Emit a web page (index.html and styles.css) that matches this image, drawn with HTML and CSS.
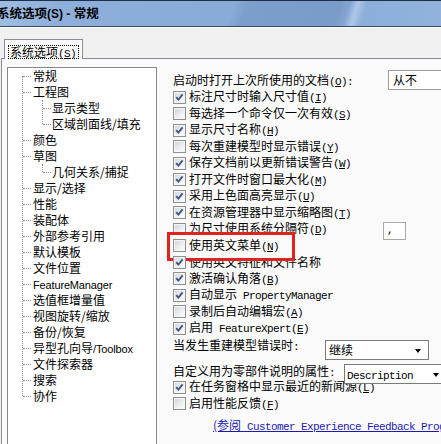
FILE: index.html
```html
<!DOCTYPE html>
<html lang="zh-CN">
<head>
<meta charset="utf-8">
<title>系统选项(S) - 常规</title>
<link rel="stylesheet" href="styles.css">
</head>
<body>
<div class="dialog">
  <div class="titlebar"><span class="title">系统选项<span class="tl">(S) - </span>常规</span></div>
  <div class="tabstrip">
    <div class="tab"><span class="tab-label">系统选项<span class="tm">(<u>S</u>)</span></span></div>
  </div>
  <div class="panel">
    <div class="tree">
      <ul class="tree-root">
        <li><div class="node">常规</div></li>
        <li><div class="node">工程图</div>
          <ul class="tree-sub">
            <li><div class="node">显示类型</div></li>
            <li><div class="node">区域剖面线/填充</div></li>
          </ul>
        </li>
        <li><div class="node">颜色</div></li>
        <li><div class="node">草图</div>
          <ul class="tree-sub">
            <li><div class="node">几何关系/捕捉</div></li>
          </ul>
        </li>
        <li><div class="node">显示/选择</div></li>
        <li><div class="node">性能</div></li>
        <li><div class="node">装配体</div></li>
        <li><div class="node">外部参考引用</div></li>
        <li><div class="node">默认模板</div></li>
        <li><div class="node">文件位置</div></li>
        <li><div class="node"><span class="lat">FeatureManager</span></div></li>
        <li><div class="node">选值框增量值</div></li>
        <li><div class="node">视图旋转/缩放</div></li>
        <li><div class="node">备份/恢复</div></li>
        <li><div class="node">异型孔向导<span class="lat">/Toolbox</span></div></li>
        <li><div class="node">文件探索器</div></li>
        <li><div class="node">搜索</div></li>
        <li><div class="node">协作</div></li>
      </ul>
    </div>

    <div class="opts">
      <div class="row row-first">
        <span class="lbl">启动时打开上次所使用的文档<span class="m">(<u>O</u>):</span></span>
        <div class="combo combo-never"><span class="combo-text">从不</span></div>
      </div>

      <div class="row"><span class="cb"><svg class="chk" viewBox="0 0 13 13"><path d="M3.2 6.2 L5.4 8.6 L9.6 3.4"/></svg></span><span class="lbl">标注尺寸时输入尺寸值<span class="m">(<u>I</u>)</span></span></div>
      <div class="row"><span class="cb"></span><span class="lbl">每选择一个命令仅一次有效<span class="m">(<u>S</u>)</span></span></div>
      <div class="row"><span class="cb"><svg class="chk" viewBox="0 0 13 13"><path d="M3.2 6.2 L5.4 8.6 L9.6 3.4"/></svg></span><span class="lbl">显示尺寸名称<span class="m">(<u>H</u>)</span></span></div>
      <div class="row"><span class="cb"></span><span class="lbl">每次重建模型时显示错误<span class="m">(<u>Y</u>)</span></span></div>
      <div class="row"><span class="cb"><svg class="chk" viewBox="0 0 13 13"><path d="M3.2 6.2 L5.4 8.6 L9.6 3.4"/></svg></span><span class="lbl">保存文档前以更新错误警告<span class="m">(<u>W</u>)</span></span></div>
      <div class="row"><span class="cb"><svg class="chk" viewBox="0 0 13 13"><path d="M3.2 6.2 L5.4 8.6 L9.6 3.4"/></svg></span><span class="lbl">打开文件时窗口最大化<span class="m">(<u>M</u>)</span></span></div>
      <div class="row"><span class="cb"><svg class="chk" viewBox="0 0 13 13"><path d="M3.2 6.2 L5.4 8.6 L9.6 3.4"/></svg></span><span class="lbl">采用上色面高亮显示<span class="m">(<u>U</u>)</span></span></div>
      <div class="row"><span class="cb"><svg class="chk" viewBox="0 0 13 13"><path d="M3.2 6.2 L5.4 8.6 L9.6 3.4"/></svg></span><span class="lbl">在资源管理器中显示缩略图<span class="m">(<u>T</u>)</span></span></div>
      <div class="row row-sep"><span class="cb"></span><span class="lbl">为尺寸使用系统分隔符<span class="m">(<u>D</u>)</span></span><span class="sep-input">,</span></div>
      <div class="row row-hl"><span class="cb"></span><span class="lbl">使用英文菜单<span class="m">(<u>N</u>)</span></span></div>
      <div class="row"><span class="cb"><svg class="chk" viewBox="0 0 13 13"><path d="M3.2 6.2 L5.4 8.6 L9.6 3.4"/></svg></span><span class="lbl">使用英文特征和文件名称</span></div>
      <div class="row"><span class="cb"><svg class="chk" viewBox="0 0 13 13"><path d="M3.2 6.2 L5.4 8.6 L9.6 3.4"/></svg></span><span class="lbl">激活确认角落<span class="m">(<u>B</u>)</span></span></div>
      <div class="row"><span class="cb"><svg class="chk" viewBox="0 0 13 13"><path d="M3.2 6.2 L5.4 8.6 L9.6 3.4"/></svg></span><span class="lbl">自动显示<span class="m"> PropertyManager</span></span></div>
      <div class="row"><span class="cb"></span><span class="lbl">录制后自动编辑宏<span class="m">(<u>A</u>)</span></span></div>
      <div class="row"><span class="cb"><svg class="chk" viewBox="0 0 13 13"><path d="M3.2 6.2 L5.4 8.6 L9.6 3.4"/></svg></span><span class="lbl">启用<span class="m"> FeatureXpert(<u>E</u>)</span></span></div>

      <div class="row row-combo1">
        <span class="lbl">当发生重建模型错误时<span class="m">:</span></span>
        <div class="combo combo-cont"><span class="combo-text">继续</span><span class="arrow"></span></div>
      </div>
      <div class="row row-combo2">
        <span class="lbl">自定义用为零部件说明的属性<span class="m">:</span></span>
        <div class="combo combo-desc"><span class="combo-text m">Description</span><span class="arrow"></span></div>
      </div>

      <div class="row"><span class="cb"><svg class="chk" viewBox="0 0 13 13"><path d="M3.2 6.2 L5.4 8.6 L9.6 3.4"/></svg></span><span class="lbl">在任务窗格中显示最近的新闻源<span class="m">(<u>L</u>)</span></span></div>
      <div class="row"><span class="cb"></span><span class="lbl">启用性能反馈<span class="m">(<u>F</u>)</span></span></div>
      <div class="row row-link"><a class="link" href="#">(参阅<span class="m"> Customer Experience Feedback Program)</span></a></div>
    </div>
  </div>
</div>
</body>
</html>
```

FILE: styles.css
```css
* {
  box-sizing: border-box;
  margin: 0;
  padding: 0;
}

html, body {
  width: 441px;
  height: 444px;
  overflow: hidden;
}

body {
  background: #f0f0f0;
  font-family: "Noto Sans CJK SC", "Liberation Sans", sans-serif;
  font-size: 12px;
  color: #000;
}

.dialog {
  width: 480px;
  height: 444px;
  display: flex;
  flex-direction: column;
}

/* ---------- title bar ---------- */
.titlebar {
  flex: none;
  height: 27px;
  border-top: 1px solid #1f2f4a;
  border-bottom: 1px solid #344d70;
  box-shadow: 0 1px 0 #ffffff;
  background:
    linear-gradient(108deg, transparent 0 72%, rgba(200, 220, 245, 0.55) 73.5%, transparent 75.5%),
    linear-gradient(112deg, transparent 0 48%, rgba(60, 90, 140, 0.16) 51%, rgba(60, 90, 140, 0.2) 70%, transparent 73%),
    linear-gradient(90deg, #9fbde2 0%, #8eafd9 12%, #89abd6 45%, #8aacd7 70%, #95b5dd 100%);
  display: flex;
  align-items: center;
}

.title {
  margin-left: -3px;
  font-weight: bold;
  font-size: 12.5px;
  line-height: 16px;
  white-space: nowrap;
}

.tl {
  font-family: "Liberation Sans", sans-serif;
  font-size: 12px;
}

/* ---------- tab strip ---------- */
.tabstrip {
  flex: none;
  padding: 12px 0 0 4px;
  display: flex;
}

.tab {
  position: relative;
  z-index: 1;
  width: 79px;
  height: 20px;
  margin-bottom: -1px;
  background: #fafafa;
  border: 1px solid #898c95;
  border-bottom: none;
  padding: 3px 0 0 3px;
}

.tab-label {
  display: inline-block;
  height: 14px;
  line-height: 12px;
  padding: 0 2px 0 1px;
  border: 1px dotted #000;
  white-space: nowrap;
}

.tm, .m {
  font-family: "Liberation Mono", monospace;
  font-size: 11px;
  letter-spacing: -0.6px;
}

/* ---------- panel ---------- */
.panel {
  flex: 1;
  margin-left: 1px;
  background: #fafafa;
  border-top: 1px solid #898c95;
  border-left: 1px solid #898c95;
  padding: 8px 0 0 5px;
  display: flex;
  gap: 16px;
  align-items: flex-start;
}

/* ---------- tree ---------- */
.tree {
  flex: none;
  width: 150px;
  height: 400px;
  background: #ffffff;
  border: 1px solid #828790;
}

.tree-root, .tree-sub {
  list-style: none;
  position: relative;
}

.tree-root::before,
.tree-sub::before {
  content: "";
  position: absolute;
  border-left: 1px dotted #8f8f8f;
}

.tree-root::before {
  left: 14px;
  top: 8px;
  bottom: 8px;
}

.tree-sub::before {
  left: 34px;
  top: 0;
  bottom: 8px;
}

.node {
  position: relative;
  height: 16px;
  line-height: 16px;
  padding-left: 25px;
  white-space: nowrap;
}

.node::before {
  content: "";
  position: absolute;
  left: 15px;
  top: 8px;
  width: 8px;
  border-top: 1px dotted #8f8f8f;
}

.tree-sub .node {
  padding-left: 44px;
}

.tree-sub .node::before {
  left: 35px;
}

.lat {
  font-family: "Liberation Sans", sans-serif;
  font-size: 11px;
  letter-spacing: -0.15px;
}

/* ---------- options ---------- */
.opts {
  flex: none;
  width: 274px;
  padding-top: 3px;
  display: flex;
  flex-direction: column;
}

.row {
  height: 16.5px;
  display: flex;
  align-items: center;
  white-space: nowrap;
}

.lbl {
  line-height: 16.5px;
}

.row-first {
  height: 19px;
  align-items: flex-start;
}

.row-first .lbl {
  margin-top: 2px;
}

.cb {
  flex: none;
  position: relative;
  width: 13px;
  height: 13px;
  margin-right: 3px;
  border: 1px solid #8e8f8f;
  background: linear-gradient(135deg, #cfd3d8 0%, #eceef0 55%, #ffffff 100%);
  box-shadow: inset 0 0 0 1px #f6f6f6;
}

.chk {
  position: absolute;
  left: -1px;
  top: -1px;
  width: 13px;
  height: 13px;
}

.chk path {
  fill: none;
  stroke: #3f5680;
  stroke-width: 1.9;
}

/* combo boxes */
.combo {
  flex: none;
  position: relative;
  height: 20px;
  background: #ffffff;
  border: 1px solid #9c9c9c;
  padding-left: 3px;
  line-height: 18px;
}

.combo-never {
  width: 59px;
  margin-left: auto;
  padding-left: 4px;
}

.row-combo1 {
  height: 26px;
  align-items: flex-start;
}

.combo-cont {
  width: 104px;
  margin: 3.5px 18px 0 auto;
  border-color: #7a7a7a;
}

.row-combo2 {
  align-items: flex-start;
}

.combo-desc {
  width: 103px;
  margin: 1.5px 0 0 auto;
  border-color: #7a7a7a;
  padding-left: 2px;
}

.arrow {
  position: absolute;
  right: 7px;
  top: 8px;
  width: 0;
  height: 0;
  border-left: 3.5px solid transparent;
  border-right: 3.5px solid transparent;
  border-top: 4px solid #000;
}

/* separator input */
.sep-input {
  flex: none;
  align-self: flex-start;
  width: 23px;
  height: 18px;
  margin: 1px 41px 0 auto;
  background: #ffffff;
  border: 1px solid #a8a8a8;
  padding-left: 3px;
  font-family: "Liberation Mono", monospace;
  font-size: 11px;
  line-height: 14px;
}

/* highlighted row: annotation box drawn over the row above */
.row-hl {
  position: relative;
}

.row-hl::before {
  content: "";
  position: absolute;
  left: -6px;
  top: -5.5px;
  width: 122px;
  height: 22.5px;
  background: #fafafa;
  border: 3px solid #e0231f;
  z-index: 0;
}

.row-hl > .cb,
.row-hl > .lbl {
  position: relative;
  z-index: 1;
}

/* link */
.row-link {
  margin-top: 6px;
  padding-left: 40px;
}

.link {
  color: #1a1ab0;
  text-decoration: underline;
  line-height: 16.5px;
}
```
